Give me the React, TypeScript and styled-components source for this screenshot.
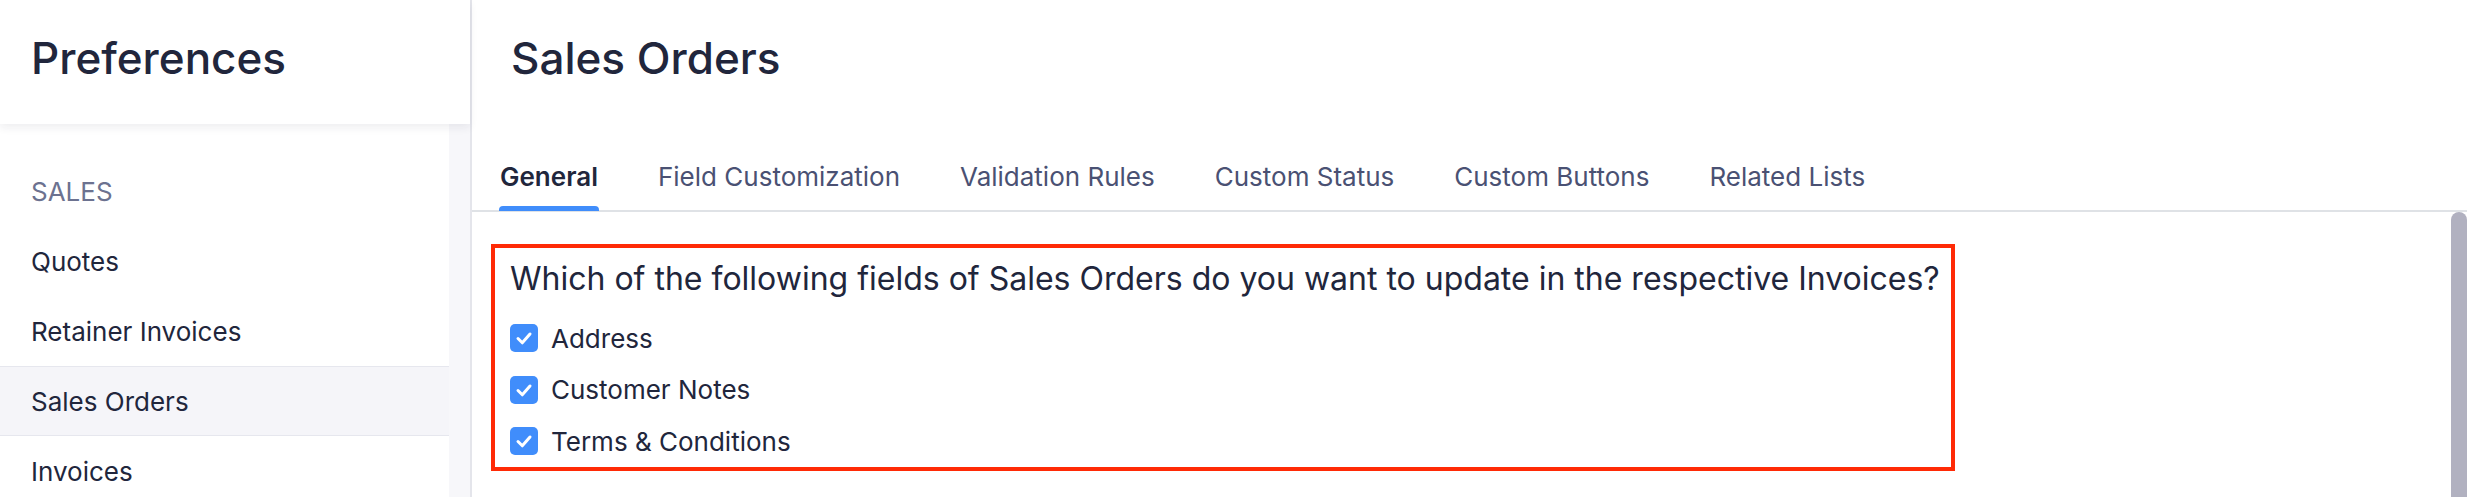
import styled, { createGlobalStyle } from 'styled-components';

const GlobalStyle = createGlobalStyle`
  html, body, #root {
    margin: 0;
    height: 100%;
  }
  body {
    font-family: Inter, "Noto Sans", sans-serif;
    color: #21263c;
    background: #fff;
  }
`;

const Page = styled.div`
  display: flex;
  height: 100vh;
  overflow: hidden;
`;

const Sidebar = styled.aside`
  width: 470px;
  flex-shrink: 0;
  display: flex;
  flex-direction: column;
  border-right: 2px solid #e4e5eb;
`;

const SidebarHeader = styled.div`
  height: 124px;
  flex-shrink: 0;
  box-sizing: border-box;
  padding: 32px 31px 0;
  background: #fff;
  box-shadow: 0 4px 8px rgba(30, 35, 60, 0.07);
  position: relative;
  z-index: 1;
`;

const PageTitle = styled.h1`
  margin: 0;
  font-size: 44px;
  line-height: 53px;
  font-weight: 500;
  color: #21263c;
`;

const NavArea = styled.div`
  flex: 1;
  min-height: 0;
  display: flex;
  overflow: hidden;
`;

const NavList = styled.nav`
  flex: 1;
  padding-top: 32px;
`;

const NavTrack = styled.div`
  width: 21px;
  background: #f7f7fa;
`;

const SectionLabel = styled.div`
  height: 70px;
  display: flex;
  align-items: center;
  padding-left: 31px;
  font-size: 26px;
  color: #6c7290;
  text-transform: uppercase;
`;

const NavItem = styled.div<{ $active?: boolean }>`
  height: 68px;
  flex-shrink: 0;
  display: flex;
  align-items: center;
  padding-left: 31px;
  font-size: 26px;
  color: #21263c;
  background: ${(p) => (p.$active ? '#f5f5f9' : 'transparent')};
  border-top: 1px solid ${(p) => (p.$active ? '#e6e7ee' : 'transparent')};
  border-bottom: 1px solid ${(p) => (p.$active ? '#e6e7ee' : 'transparent')};
`;

const Main = styled.main`
  flex: 1;
  min-width: 0;
  display: flex;
  flex-direction: column;
  padding-top: 32px;
`;

const SectionTitle = styled.h2`
  margin: 0 0 0 39px;
  flex-shrink: 0;
  font-size: 44px;
  line-height: 53px;
  font-weight: 500;
  color: #21263c;
`;

const TabBar = styled.div`
  margin-top: 77px;
  flex-shrink: 0;
  padding-left: 28px;
  display: flex;
  gap: 60px;
  border-bottom: 2px solid #dfe2e6;
`;

const Tab = styled.div<{ $active?: boolean }>`
  position: relative;
  padding-bottom: 18px;
  font-size: 26px;
  line-height: 30px;
  font-weight: ${(p) => (p.$active ? 600 : 400)};
  color: ${(p) => (p.$active ? '#21263c' : '#4a5173')};
  &::after {
    content: '';
    display: ${(p) => (p.$active ? 'block' : 'none')};
    position: absolute;
    left: -1px;
    right: -1px;
    bottom: -1px;
    height: 5px;
    border-radius: 4px 4px 0 0;
    background: #408dfb;
  }
`;

const Body = styled.div`
  flex: 1;
  display: flex;
  min-height: 0;
`;

const Content = styled.div`
  flex: 1;
  padding: 32px 0 0 19px;
`;

const ScrollTrack = styled.div`
  width: 16px;
  display: flex;
`;

const ScrollThumb = styled.div`
  flex: 1;
  background: #b1b1c0;
  border-radius: 8px 8px 0 0;
`;

const Highlight = styled.div`
  display: inline-flex;
  flex-direction: column;
  border: 4px solid #ff2a06;
  padding: 12px 11px 12px 15px;
`;

const Question = styled.div`
  font-size: 32px;
  line-height: 38px;
  color: #21263c;
  margin-bottom: 26px;
  white-space: nowrap;
`;

const Options = styled.div`
  display: flex;
  flex-direction: column;
  gap: 23.5px;
`;

const Option = styled.label`
  display: flex;
  align-items: center;
  height: 28px;
  gap: 13px;
  font-size: 26px;
  color: #21263c;
`;

const Box = styled.span`
  width: 28px;
  height: 28px;
  border-radius: 5px;
  background: #408dfb;
  display: flex;
  align-items: center;
  justify-content: center;
  flex-shrink: 0;
`;

function Checkbox() {
  return (
    <Box>
      <svg width="28" height="28" viewBox="0 0 28 28">
        <polyline
          points="8,14.5 12.3,18.8 20,10"
          fill="none"
          stroke="#fff"
          strokeWidth="3"
          strokeLinecap="round"
          strokeLinejoin="round"
        />
      </svg>
    </Box>
  );
}

const tabs = [
  'General',
  'Field Customization',
  'Validation Rules',
  'Custom Status',
  'Custom Buttons',
  'Related Lists',
];

const fields = ['Address', 'Customer Notes', 'Terms & Conditions'];

export default function App() {
  return (
    <Page>
      <GlobalStyle />
      <Sidebar>
        <SidebarHeader>
          <PageTitle>Preferences</PageTitle>
        </SidebarHeader>
        <NavArea>
          <NavList>
            <SectionLabel>Sales</SectionLabel>
            <NavItem>Quotes</NavItem>
            <NavItem>Retainer Invoices</NavItem>
            <NavItem $active>Sales Orders</NavItem>
            <NavItem>Invoices</NavItem>
          </NavList>
          <NavTrack />
        </NavArea>
      </Sidebar>
      <Main>
        <SectionTitle>Sales Orders</SectionTitle>
        <TabBar>
          {tabs.map((t, i) => (
            <Tab key={t} $active={i === 0}>
              {t}
            </Tab>
          ))}
        </TabBar>
        <Body>
          <Content>
            <Highlight>
              <Question>
                Which of the following fields of Sales Orders do you want to update in the
                respective Invoices?
              </Question>
              <Options>
                {fields.map((f) => (
                  <Option key={f}>
                    <Checkbox />
                    {f}
                  </Option>
                ))}
              </Options>
            </Highlight>
          </Content>
          <ScrollTrack>
            <ScrollThumb />
          </ScrollTrack>
        </Body>
      </Main>
    </Page>
  );
}
